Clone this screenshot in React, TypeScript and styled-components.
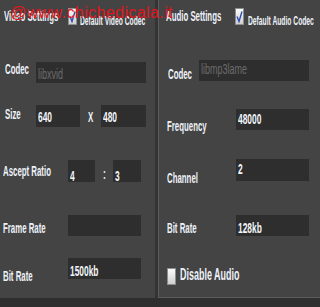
import React from "react";
import styled, { createGlobalStyle } from "styled-components";

const Global = createGlobalStyle`
  html, body { margin: 0; padding: 0; background: #2f2f2f; }
  body { width: 320px; height: 307px; overflow: hidden; font-family: "Liberation Sans", Arial, sans-serif; }
`;

const Screen = styled.div`
  position: relative;
  width: 320px;
  height: 307px;
  overflow: hidden;
  background: #2f2f2f;
`;

const Panels = styled.div`
  display: flex;
  gap: 3px;
  height: 298px;
  background: #343434;
`;

const Panel = styled.section<{ $w?: number; $edge?: boolean }>`
  ${(p) => (p.$w ? `width: ${p.$w}px; flex: none;` : `flex: 1; min-width: 0;`)}
  display: flex;
  flex-direction: column;
  box-sizing: border-box;
  background: #444444;
  overflow: hidden;
  ${(p) => p.$edge && `border-left: 1px solid #5c5c5c; border-bottom: 1px solid #5c5c5c;`}
`;

const Row = styled.div<{ $mt: number; $h: number }>`
  display: flex;
  align-items: flex-start;
  flex: none;
  margin-top: ${(p) => p.$mt}px;
  height: ${(p) => p.$h}px;
`;

const Cell = styled.div<{ $w?: number; $pl?: number; $pt?: number }>`
  flex: none;
  box-sizing: border-box;
  ${(p) => (p.$w ? `width: ${p.$w}px;` : "")}
  padding-left: ${(p) => p.$pl ?? 0}px;
  padding-top: ${(p) => p.$pt ?? 0}px;
`;

const Narrow = styled.span<{ $size: number; $lh: number; $color?: string; $center?: boolean; $bold?: boolean }>`
  display: inline-block;
  white-space: nowrap;
  font-size: ${(p) => p.$size}px;
  line-height: ${(p) => p.$lh}px;
  font-weight: ${(p) => (p.$bold === false ? 400 : 700)};
  color: ${(p) => p.$color ?? "#eef2f8"};
  transform: scaleX(${(p) => (p.$bold === false ? 0.6 : 0.56)});
  transform-origin: ${(p) => (p.$center ? "center top" : "left top")};
`;

const Field = styled.div<{ $w: number; $h: number; $mt?: number; $pt?: number }>`
  flex: none;
  box-sizing: border-box;
  width: ${(p) => p.$w}px;
  height: ${(p) => p.$h}px;
  margin-top: ${(p) => p.$mt ?? 0}px;
  padding: ${(p) => p.$pt ?? 0}px 0 0 2px;
  background: #2e2e2e;
  overflow: visible;
`;

const Sep = styled.div<{ $w: number; $pt: number }>`
  flex: none;
  display: flex;
  justify-content: center;
  width: ${(p) => p.$w}px;
  padding-top: ${(p) => p.$pt}px;
  box-sizing: border-box;
`;

const Box = styled.span<{ $ml: number; $mt: number }>`
  flex: none;
  display: flex;
  align-items: center;
  justify-content: center;
  box-sizing: border-box;
  width: 9px;
  height: 17px;
  margin-left: ${(p) => p.$ml}px;
  margin-top: ${(p) => p.$mt}px;
  border: 1px solid #8e8e8e;
  background: linear-gradient(#fbfbfb, #cfcfcf);
`;

const Watermark = styled.div`
  position: absolute;
  left: 10px;
  top: 4px;
  font-size: 16px;
  line-height: 18px;
  letter-spacing: 0.4px;
  color: #e5141c;
  white-space: nowrap;
  pointer-events: none;
`;

const Checkbox = ({ checked, ml, mt }: { checked?: boolean; ml: number; mt: number }) => (
  <Box $ml={ml} $mt={mt}>
    {checked && (
      <svg width="7" height="13" viewBox="0 0 7 13">
        <path d="M1 6.5 L3 11.5 L6 1.5" fill="none" stroke="#2c4fb4" strokeWidth="1.4" />
      </svg>
    )}
  </Box>
);

const Label = ({ children, size = 14 }: { children: React.ReactNode; size?: number }) => (
  <Narrow $size={size} $lh={size + 2}>{children}</Narrow>
);

const Value = ({ children, dim }: { children: React.ReactNode; dim?: boolean }) => (
  <Narrow $size={15} $lh={16} $bold={!dim} $color={dim ? "#6c6c6c" : "#f2f5fa"}>{children}</Narrow>
);

export default function App() {
  return (
    <Screen>
      <Global />
      <Panels>
        <Panel $w={155}>
          <Row $mt={7} $h={19}>
            <Cell $w={68} $pl={4}>
              <Label>Video Settings</Label>
            </Cell>
            <Checkbox checked ml={0} mt={1} />
            <Cell $pl={3} $pt={4}>
              <Narrow $size={12} $lh={14}>Default Video Codec</Narrow>
            </Cell>
          </Row>

          <Row $mt={34} $h={23}>
            <Cell $w={36} $pl={5}>
              <Label>Codec</Label>
            </Cell>
            <Field $w={110} $h={21} $mt={2} $pt={3}>
              <Value dim>libxvid</Value>
            </Field>
          </Row>

          <Row $mt={22} $h={22}>
            <Cell $w={36} $pl={5}>
              <Label>Size</Label>
            </Cell>
            <Field $w={44} $h={22} $pt={3}>
              <Value>640</Value>
            </Field>
            <Sep $w={21} $pt={4}>
              <Narrow $size={14} $lh={16} $center>X</Narrow>
            </Sep>
            <Field $w={45} $h={22} $pt={3}>
              <Value>480</Value>
            </Field>
          </Row>

          <Row $mt={33} $h={22}>
            <Cell $w={68} $pl={3} $pt={2}>
              <Label>Ascept Ratio</Label>
            </Cell>
            <Field $w={27} $h={22} $pt={7}>
              <Value>4</Value>
            </Field>
            <Sep $w={18} $pt={6}>
              <Narrow $size={15} $lh={16} $center>:</Narrow>
            </Sep>
            <Field $w={28} $h={22} $pt={7}>
              <Value>3</Value>
            </Field>
          </Row>

          <Row $mt={33} $h={21}>
            <Cell $w={68} $pl={3} $pt={4}>
              <Label>Frame Rate</Label>
            </Cell>
            <Field $w={73} $h={21} />
          </Row>

          <Row $mt={22} $h={21}>
            <Cell $w={68} $pl={3} $pt={9}>
              <Label>Bit Rate</Label>
            </Cell>
            <Field $w={73} $h={21} $pt={4}>
              <Value>1500kb</Value>
            </Field>
          </Row>
        </Panel>

        <Panel $edge>
          <Row $mt={7} $h={19}>
            <Cell $w={76} $pl={7}>
              <Label>Audio Settings</Label>
            </Cell>
            <Checkbox checked ml={0} mt={1} />
            <Cell $pl={4} $pt={4}>
              <Narrow $size={12} $lh={14}>Default Audio Codec</Narrow>
            </Cell>
          </Row>

          <Row $mt={34} $h={21}>
            <Cell $w={40} $pl={9} $pt={5}>
              <Label>Codec</Label>
            </Cell>
            <Field $w={110} $h={21} $pt={0}>
              <Value dim>libmp3lame</Value>
            </Field>
          </Row>

          <Row $mt={28} $h={21}>
            <Cell $w={77} $pl={8} $pt={8}>
              <Label>Frequency</Label>
            </Cell>
            <Field $w={73} $h={21} $pt={1}>
              <Value>48000</Value>
            </Field>
          </Row>

          <Row $mt={29} $h={22}>
            <Cell $w={77} $pl={8} $pt={10}>
              <Label>Channel</Label>
            </Cell>
            <Field $w={73} $h={22} $pt={1}>
              <Value>2</Value>
            </Field>
          </Row>

          <Row $mt={34} $h={21}>
            <Cell $w={77} $pl={8} $pt={4}>
              <Label>Bit Rate</Label>
            </Cell>
            <Field $w={73} $h={21} $pt={4}>
              <Value>128kb</Value>
            </Field>
          </Row>

          <Row $mt={30} $h={19}>
            <Checkbox ml={8} mt={2} />
            <Cell $pl={4}>
              <Label size={16}>Disable Audio</Label>
            </Cell>
          </Row>
        </Panel>
      </Panels>
      <Watermark>@www.chichedicala.it</Watermark>
    </Screen>
  );
}
